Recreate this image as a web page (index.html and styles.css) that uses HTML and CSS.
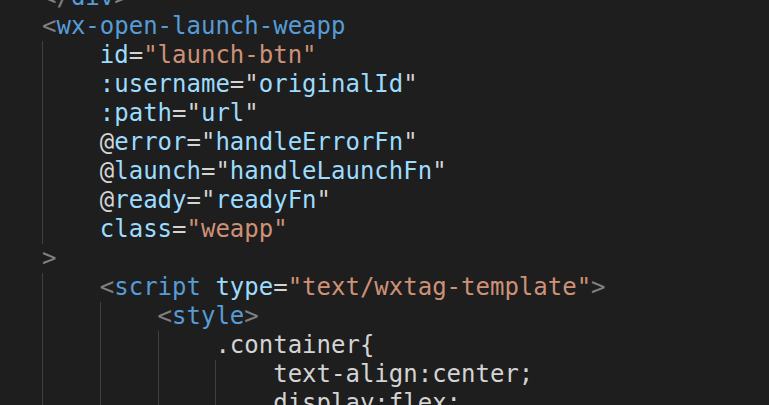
FILE: index.html
```html
<!DOCTYPE html>
<html>
<head>
<meta charset="utf-8">
<link rel="stylesheet" href="styles.css">
</head>
<body>
<div class="editor">
  <div class="code">
    <div class="row"><span class="p">&lt;/</span><span class="t">div</span><span class="p">&gt;</span></div>
    <div class="row"><span class="p">&lt;</span><span class="t">wx-open-launch-weapp</span></div>
    <div class="row"><span class="ind"></span><span class="a">id</span><span class="o">=</span><span class="s">"launch-btn"</span></div>
    <div class="row"><span class="ind"></span><span class="a">:username</span><span class="o">=</span><span class="o">"</span><span class="a">originalId</span><span class="o">"</span></div>
    <div class="row"><span class="ind"></span><span class="a">:path</span><span class="o">=</span><span class="o">"</span><span class="a">url</span><span class="o">"</span></div>
    <div class="row"><span class="ind"></span><span class="o">@</span><span class="a">error</span><span class="o">=</span><span class="o">"</span><span class="a">handleErrorFn</span><span class="o">"</span></div>
    <div class="row"><span class="ind"></span><span class="o">@</span><span class="a">launch</span><span class="o">=</span><span class="o">"</span><span class="a">handleLaunchFn</span><span class="o">"</span></div>
    <div class="row"><span class="ind"></span><span class="o">@</span><span class="a">ready</span><span class="o">=</span><span class="o">"</span><span class="a">readyFn</span><span class="o">"</span></div>
    <div class="row"><span class="ind"></span><span class="a">class</span><span class="o">=</span><span class="s">"weapp"</span></div>
    <div class="row"><span class="p">&gt;</span></div>
    <div class="row"><span class="ind"></span><span class="p">&lt;</span><span class="t">script</span><span class="a"> type</span><span class="o">=</span><span class="s">"text/wxtag-template"</span><span class="p">&gt;</span></div>
    <div class="row"><span class="ind"></span><span class="ind"></span><span class="p">&lt;</span><span class="t">style</span><span class="p">&gt;</span></div>
    <div class="row"><span class="ind"></span><span class="ind"></span><span class="ind"></span><span class="o">.container{</span></div>
    <div class="row"><span class="ind"></span><span class="ind"></span><span class="ind"></span><span class="ind"></span><span class="o">text-align:center;</span></div>
    <div class="row"><span class="ind"></span><span class="ind"></span><span class="ind"></span><span class="ind"></span><span class="o">display:flex;</span></div>
  </div>
</div>
</body>
</html>
```

FILE: styles.css
```css
html, body {
  margin: 0;
  padding: 0;
  background: #1e1e1e;
  overflow: hidden;
}
.editor {
  width: 769px;
  height: 405px;
  overflow: hidden;
  background: #1e1e1e;
}
.code {
  margin-top: -17px;
  padding-left: 42px;
  font-family: "DejaVu Sans Mono", "Liberation Mono", monospace;
  font-size: 24px;
  line-height: 29px;
  color: #d4d4d4;
}
.row {
  display: flex;
  height: 29px;
  white-space: pre;
}
.ind {
  display: inline-block;
  flex: none;
  width: 4ch;
  height: 29px;
  box-sizing: border-box;
  border-left: 1px solid #404040;
}
.t { color: #569cd6; }
.p { color: #808080; }
.a { color: #9cdcfe; }
.s { color: #ce9178; }
.o { color: #d4d4d4; }
```
